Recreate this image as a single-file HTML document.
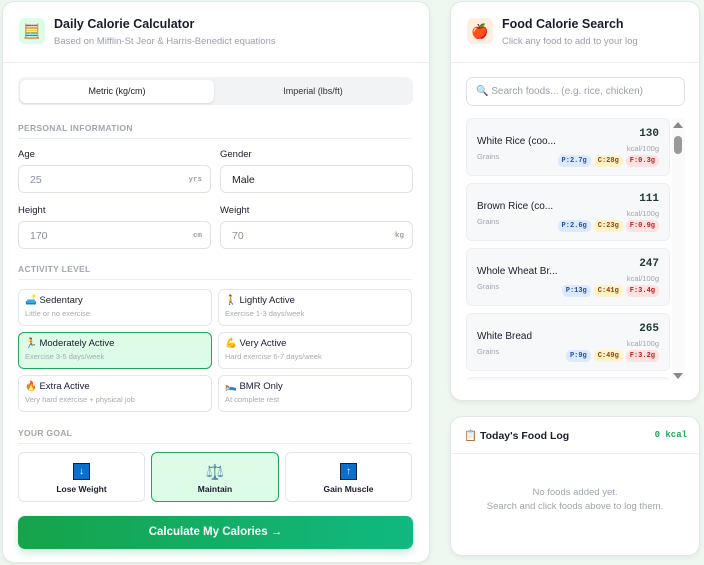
<!DOCTYPE html>
<html><head><meta charset="utf-8"><style>
*{box-sizing:border-box;margin:0;padding:0}
body{width:704px;height:565px;overflow:hidden;background:#eef8f1;font-family:"Liberation Sans","Noto Sans CJK SC",sans-serif;color:#1a1d2e;position:relative}
.card{position:absolute;background:#fff;border:1px solid #e3e8e5;border-radius:12px;box-shadow:0 2px 4px rgba(0,0,0,.06);overflow:hidden}
.abs{position:absolute}
.hd{position:absolute;left:0;right:0;top:0;height:61px;border-bottom:1px solid #eceff1}
.ico{position:absolute;width:26px;height:26px;border-radius:6px;display:flex;align-items:center;justify-content:center;font-size:14px}
.t1{font-size:12.5px;font-weight:bold}
.sub{font-size:9.5px;color:#9aa0ae}
.sec{position:absolute;left:18px;width:394px;font-size:8.5px;font-weight:bold;color:#a0a6b2;letter-spacing:.3px;border-bottom:1px solid #eceff1;padding-bottom:5px}
.lbl{position:absolute;font-size:9.5px;color:#1a1d2e}
.inp{position:absolute;height:28px;border:1px solid #dfe3e8;border-radius:6px;font-size:10.5px;color:#8a8f9c;padding:8px 11px}
.inp b{position:absolute;right:8px;top:10px;font-size:7.5px;color:#9aa0ae;font-family:"Liberation Mono",monospace}
.act{position:absolute;width:194px;height:37px;border:1px solid #e2e6ea;border-radius:6px;padding:5px 6px}
.act .n{font-size:9.5px;color:#1a1d2e}
.act .d{font-size:7.5px;color:#a6abb5;margin-top:3px}
.act.on{background:#dcfce7;border-color:#22a55a}
.goal{position:absolute;top:452px;height:50px;border:1px solid #e2e6ea;border-radius:6px;text-align:center;font-size:8.5px;font-weight:bold;padding-top:10px}
.goal .e{display:inline-block;width:17px;height:17px;background:#0b6fd0;border:1px solid #123;color:#fff;font-size:10px;line-height:15px;margin-bottom:4px}
.goal.on{background:#dcfce7;border-color:#22a55a}
.item{position:absolute;left:466px;width:204px;height:58px;background:#f7f8fa;border:1px solid #eceef2;border-radius:6px}
.item .n{position:absolute;left:10px;top:17px;font-size:10px}
.item .c{position:absolute;left:10px;top:33px;font-size:7.5px;color:#a0a5ae}
.item .k{position:absolute;right:10px;top:9px;font-size:11px;font-weight:bold;font-family:"Liberation Mono",monospace;color:#1f3b30}
.item .u{position:absolute;right:10px;top:25px;font-size:7.5px;color:#a0a5ae}
.tags{position:absolute;right:10px;top:36px;display:flex;gap:3px}
.tags span{font-family:"Liberation Mono",monospace;font-size:7px;font-weight:bold;padding:2px 4px;border-radius:5px}
.p{background:#dbeafe;color:#2b4c9b}.cc{background:#fef3c7;color:#92400e}.f{background:#fee2e2;color:#b91c1c}
</style></head><body>

<div class="card" style="left:2px;top:1px;width:428px;height:562px">
 <div class="hd"></div>
 <div class="ico" style="left:16px;top:16px;background:#dcfce7">🧮</div>
 <div class="abs t1" style="left:51px;top:15px">Daily Calorie Calculator</div>
 <div class="abs sub" style="left:51px;top:34px">Based on Mifflin-St Jeor &amp; Harris-Benedict equations</div>
</div>
<div class="abs" style="left:18px;top:77px;width:395px;height:28px;background:#f1f3f5;border-radius:7px"></div>
<div class="abs" style="left:20px;top:80px;width:194px;height:23px;background:#fff;border-radius:6px;box-shadow:0 1px 2px rgba(0,0,0,.12);font-size:9px;text-align:center;line-height:23px">Metric (kg/cm)</div>
<div class="abs" style="left:216px;top:80px;width:194px;height:23px;font-size:9px;text-align:center;line-height:23px;color:#333">Imperial (lbs/ft)</div>

<div class="sec" style="top:123px">PERSONAL INFORMATION</div>
<div class="lbl" style="left:18px;top:149px">Age</div>
<div class="lbl" style="left:220px;top:149px">Gender</div>
<div class="inp" style="left:18px;top:165px;width:193px">25<b>yrs</b></div>
<div class="inp" style="left:220px;top:165px;width:193px;color:#1a1d2e">Male</div>
<div class="lbl" style="left:18px;top:205px">Height</div>
<div class="lbl" style="left:220px;top:205px">Weight</div>
<div class="inp" style="left:18px;top:221px;width:193px">170<b>cm</b></div>
<div class="inp" style="left:220px;top:221px;width:193px">70<b>kg</b></div>

<div class="sec" style="top:264px">ACTIVITY LEVEL</div>
<div class="act" style="left:18px;top:289px"><div class="n">🛋️ Sedentary</div><div class="d">Little or no exercise</div></div>
<div class="act" style="left:218px;top:289px"><div class="n">🚶 Lightly Active</div><div class="d">Exercise 1-3 days/week</div></div>
<div class="act on" style="left:18px;top:332px"><div class="n">🏃 Moderately Active</div><div class="d">Exercise 3-5 days/week</div></div>
<div class="act" style="left:218px;top:332px"><div class="n">💪 Very Active</div><div class="d">Hard exercise 6-7 days/week</div></div>
<div class="act" style="left:18px;top:375px"><div class="n">🔥 Extra Active</div><div class="d">Very hard exercise + physical job</div></div>
<div class="act" style="left:218px;top:375px"><div class="n">🛌 BMR Only</div><div class="d">At complete rest</div></div>

<div class="sec" style="top:428px">YOUR GOAL</div>
<div class="goal" style="left:18px;width:127px"><span class="e">↓</span><br>Lose Weight</div>
<div class="goal on" style="left:151px;width:128px"><span style="font-size:15px;display:inline-block;margin-bottom:3px">⚖️</span><br>Maintain</div>
<div class="goal" style="left:285px;width:127px"><span class="e">↑</span><br>Gain Muscle</div>

<div class="abs" style="left:18px;top:516px;width:395px;height:33px;border-radius:7px;background:linear-gradient(90deg,#16a34a,#10b981);color:#fff;font-size:11.5px;font-weight:bold;text-align:center;line-height:33px;box-shadow:0 4px 8px rgba(16,160,90,.2)">Calculate My Calories →</div>

<div class="card" style="left:450px;top:1px;width:250px;height:400px">
 <div class="hd"></div>
 <div class="ico" style="left:16px;top:16px;background:#fdeedd">🍎</div>
 <div class="abs t1" style="left:51px;top:15px">Food Calorie Search</div>
 <div class="abs sub" style="left:51px;top:34px">Click any food to add to your log</div>
</div>
<div class="abs" style="left:466px;top:77px;width:219px;height:29px;border:1px solid #dfe3e8;border-radius:7px;font-size:10px;color:#9aa0ae;padding:8px 9px">🔍 Search foods... (e.g. rice, chicken)</div>
<div class="abs" style="left:672px;top:118px;width:13px;height:262px;background:#fafafa"></div>
<div class="abs" style="left:673px;top:122px;width:0;height:0;border:5px solid transparent;border-bottom:6px solid #888;border-top:0"></div>
<div class="abs" style="left:674px;top:136px;width:8px;height:18px;background:#999;border-radius:4px"></div>
<div class="abs" style="left:673px;top:373px;width:0;height:0;border:5px solid transparent;border-top:6px solid #888;border-bottom:0"></div>
<div style="position:absolute;left:0;top:118px;width:704px;height:262px;overflow:hidden">
<div style="position:absolute;top:-118px;left:0">
<div class="item" style="top:118px"><div class="n">White Rice (coo...</div><div class="c">Grains</div><div class="k">130</div><div class="u">kcal/100g</div><div class="tags"><span class="p">P:2.7g</span><span class="cc">C:28g</span><span class="f">F:0.3g</span></div></div>
<div class="item" style="top:183px"><div class="n">Brown Rice (co...</div><div class="c">Grains</div><div class="k">111</div><div class="u">kcal/100g</div><div class="tags"><span class="p">P:2.6g</span><span class="cc">C:23g</span><span class="f">F:0.9g</span></div></div>
<div class="item" style="top:248px"><div class="n">Whole Wheat Br...</div><div class="c">Grains</div><div class="k">247</div><div class="u">kcal/100g</div><div class="tags"><span class="p">P:13g</span><span class="cc">C:41g</span><span class="f">F:3.4g</span></div></div>
<div class="item" style="top:313px"><div class="n">White Bread</div><div class="c">Grains</div><div class="k">265</div><div class="u">kcal/100g</div><div class="tags"><span class="p">P:9g</span><span class="cc">C:49g</span><span class="f">F:3.2g</span></div></div>
<div class="item" style="top:377px"></div>
</div></div>

<div class="card" style="left:450px;top:416px;width:250px;height:140px">
 <div class="abs" style="left:0;right:0;top:0;height:37px;border-bottom:1px solid #eceff1"></div>
 <div class="abs" style="left:13px;top:12px;font-size:10.5px;font-weight:bold">📋 Today's Food Log</div>
 <div class="abs" style="right:12px;top:13px;font-size:9px;font-weight:bold;color:#22a55a;font-family:'Liberation Mono',monospace">0 kcal</div>
 <div class="abs" style="left:0;right:0;top:69px;text-align:center;font-size:9.5px;color:#a0a5ae;line-height:14px">No foods added yet.<br>Search and click foods above to log them.</div>
</div>
</body></html>
